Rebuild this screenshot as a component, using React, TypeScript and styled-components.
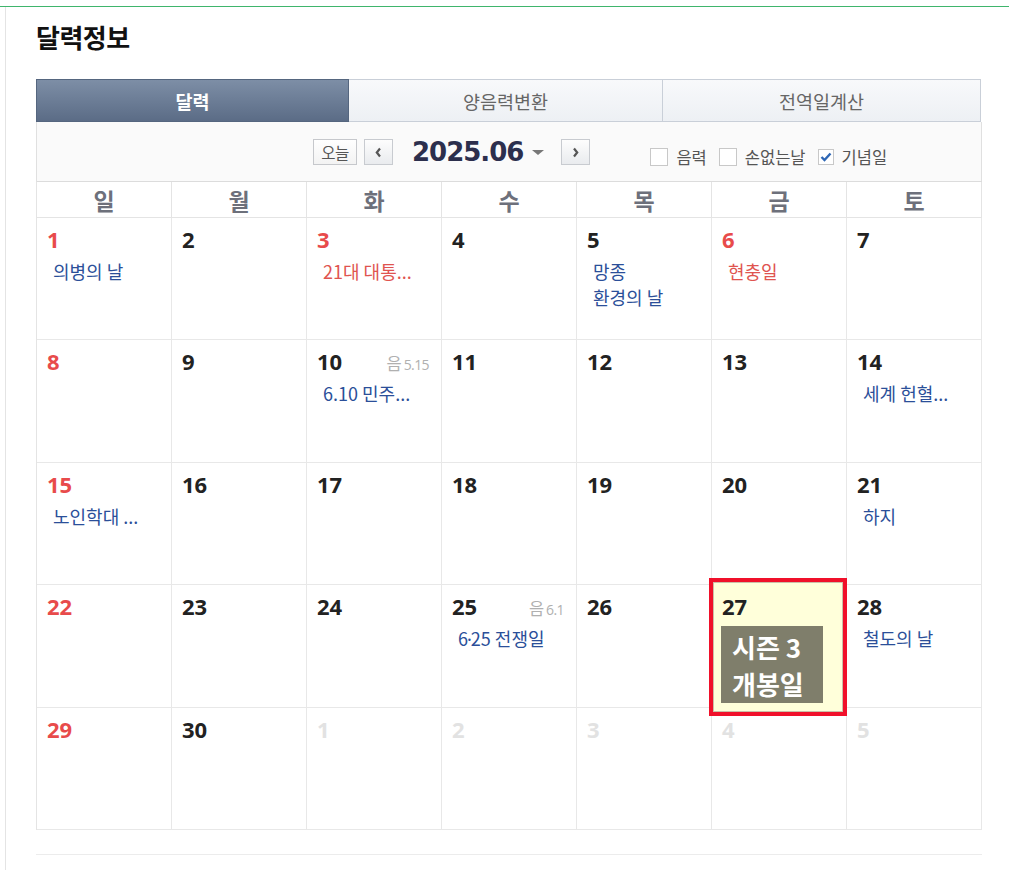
import React from "react";
import styled, { createGlobalStyle } from "styled-components";

const GlobalStyle = createGlobalStyle`
  html, body { margin: 0; padding: 0; background: #fff; }
  body { font-family: "Noto Sans CJK KR", "Noto Sans", sans-serif; }
  * { box-sizing: border-box; }
`;

const Page = styled.div`
  padding-top: 6px;
  width: 1009px;
  height: 870px;
  overflow: hidden;
`;

const TopRule = styled.div`
  height: 1px;
  background: #3fb56c;
`;

const Panel = styled.div`
  margin-left: 5px;
  border-left: 1px solid #e4e4e4;
  padding: 13px 0 20px 30px;
  width: 977px;
  min-height: 870px;
`;

const Title = styled.h2`
  margin: 0 0 26px;
  font-size: 26px;
  line-height: 33px;
  font-weight: 700;
  color: #111;
  letter-spacing: -0.5px;
`;

const Tabs = styled.div`
  display: grid;
  grid-template-columns: 313px 314px 318px;
  height: 43px;
`;

const Tab = styled.div<{ $active?: boolean }>`
  display: flex;
  align-items: center;
  justify-content: center;
  font-size: 18.5px;
  font-weight: ${(p) => (p.$active ? 700 : 400)};
  color: ${(p) => (p.$active ? "#fff" : "#666")};
  border: 1px solid ${(p) => (p.$active ? "#55667f" : "#c9cfd8")};
  border-left-width: ${(p) => (p.$active ? "1px" : "0")};
  background: ${(p) =>
    p.$active
      ? "linear-gradient(#7d8ea6, #5b6c86)"
      : "linear-gradient(#f8f9fb, #edf0f4)"};
`;

const ControlBar = styled.div`
  height: 59px;
  background: #fafafa;
  border-left: 1px solid #e0e0e0;
  border-right: 1px solid #e0e0e0;
  display: flex;
  align-items: flex-start;
  padding: 17px 0 0 276px;
`;

const TodayButton = styled.div`
  width: 44px;
  height: 26px;
  border: 1px solid #c6c8cc;
  background: linear-gradient(#ffffff, #f3f3f3);
  font-size: 15.5px;
  color: #555;
  display: flex;
  align-items: center;
  justify-content: center;
  letter-spacing: -0.5px;
`;

const NavButton = styled.div<{ $ml: number }>`
  width: 29px;
  height: 26px;
  margin-left: ${(p) => p.$ml}px;
  border: 1px solid #c8cbd0;
  background: linear-gradient(#fdfdfd, #e9ebee);
  display: flex;
  align-items: center;
  justify-content: center;
`;

const MonthLabel = styled.div`
  margin-left: 19px;
  font-family: "DejaVu Sans", sans-serif;
  font-weight: 700;
  font-size: 26px;
  letter-spacing: -1px;
  line-height: 26px;
  color: #2c2f4d;
`;

const Caret = styled.div`
  margin: 11px 0 0 9px;
  width: 0;
  height: 0;
  border-left: 6px solid transparent;
  border-right: 6px solid transparent;
  border-top: 5px solid #777;
`;

const Options = styled.div`
  margin-left: 60px;
  margin-top: 9px;
  display: flex;
  align-items: center;
`;

const Option = styled.label`
  display: flex;
  align-items: center;
  font-size: 16.5px;
  color: #555;
  margin-right: 12px;
  line-height: 18px;
`;

const Box = styled.span<{ $checked?: boolean }>`
  width: ${(p) => (p.$checked ? 16 : 18)}px;
  height: ${(p) => (p.$checked ? 16 : 18)}px;
  border: 1px solid #c8c8c8;
  background: #fff;
  margin-right: 8px;
  display: inline-flex;
  align-items: center;
  justify-content: center;
`;

const Grid = styled.div`
  display: grid;
  grid-template-columns: repeat(7, 135px);
  border-left: 1px solid #e4e4e4;
  border-top: 1px solid #dcdcdc;
  width: 946px;
`;

const HeadCell = styled.div`
  height: 36px;
  border-right: 1px solid #e4e4e4;
  border-bottom: 1px solid #e4e4e4;
  display: flex;
  align-items: center;
  justify-content: center;
  font-size: 23px;
  font-weight: 700;
  color: #6d707b;
`;

const Cell = styled.div<{ $highlight?: boolean }>`
  position: relative;
  z-index: ${(p) => (p.$highlight ? 2 : 1)};
  height: 122.4px;
  border-right: 1px solid #e8e8e8;
  border-bottom: 1px solid #e8e8e8;
  padding: 9px 12px 0 10px;
`;

const HighlightFrame = styled.div`
  position: absolute;
  left: -3px;
  right: -1px;
  top: -7px;
  bottom: -9px;
  border: 4px solid #f0102a;
  background: #ffffda;
  box-shadow: inset 0 0 0 1px #cbbfa8;
  z-index: -1;
`;

const DayLine = styled.div`
  display: flex;
  justify-content: space-between;
  align-items: baseline;
  height: 24px;
`;

const DayNum = styled.span<{ $tone: "red" | "dark" | "faded" }>`
  font-family: "Open Sans", sans-serif;
  font-weight: 700;
  font-size: 22px;
  line-height: 24px;
  color: ${(p) =>
    p.$tone === "red" ? "#e84b4b" : p.$tone === "faded" ? "#e2e2e2" : "#222"};
`;

const Lunar = styled.span`
  color: #b0b0b0;
  font-size: 16.5px;
  line-height: 24px;
  & small {
    font-family: "Open Sans", sans-serif;
    font-size: 14px;
    margin-left: 2px;
    letter-spacing: -0.6px;
  }
`;

const Events = styled.div`
  margin-top: 7px;
  padding-left: 6px;
`;

const EventText = styled.div<{ $red?: boolean }>`
  font-size: 18px;
  line-height: 26px;
  color: ${(p) => (p.$red ? "#e05450" : "#2b4f99")};
  white-space: nowrap;
`;

const Dot = styled.span`
  font-family: "Noto Sans", sans-serif;
  margin: 0 -1px;
`;

const Badge = styled.div`
  margin-top: 8px;
  margin-left: -1px;
  width: 102px;
  height: 77px;
  background: #7f7e6b;
  color: #fff;
  font-weight: 700;
  font-size: 26px;
  line-height: 37px;
  padding: 2px 0 0 11px;
  white-space: nowrap;
`;

const BottomRule = styled.div`
  margin-top: 24px;
  width: 946px;
  height: 1px;
  background: #ececec;
`;

type Day = {
  n: number;
  tone: "red" | "dark" | "faded";
  events?: { t: string; red?: boolean }[];
  lunar?: string;
  highlight?: boolean;
};

const d = (n: number, tone: Day["tone"] = "dark", extra: Partial<Day> = {}): Day => ({
  n,
  tone,
  ...extra,
});

const weeks: Day[][] = [
  [
    d(1, "red", { events: [{ t: "의병의 날" }] }),
    d(2),
    d(3, "red", { events: [{ t: "21대 대통...", red: true }] }),
    d(4),
    d(5, "dark", { events: [{ t: "망종" }, { t: "환경의 날" }] }),
    d(6, "red", { events: [{ t: "현충일", red: true }] }),
    d(7),
  ],
  [
    d(8, "red"),
    d(9),
    d(10, "dark", { lunar: "5.15", events: [{ t: "6.10 민주..." }] }),
    d(11),
    d(12),
    d(13),
    d(14, "dark", { events: [{ t: "세계 헌혈..." }] }),
  ],
  [
    d(15, "red", { events: [{ t: "노인학대 ..." }] }),
    d(16),
    d(17),
    d(18),
    d(19),
    d(20),
    d(21, "dark", { events: [{ t: "하지" }] }),
  ],
  [
    d(22, "red"),
    d(23),
    d(24),
    d(25, "dark", { lunar: "6.1", events: [{ t: "6·25 전쟁일" }] }),
    d(26),
    d(27, "dark", { highlight: true }),
    d(28, "dark", { events: [{ t: "철도의 날" }] }),
  ],
  [d(29, "red"), d(30), d(1, "faded"), d(2, "faded"), d(3, "faded"), d(4, "faded"), d(5, "faded")],
];

const weekdays = ["일", "월", "화", "수", "목", "금", "토"];

const Chevron = ({ dir }: { dir: "left" | "right" }) => (
  <svg width="9" height="11" viewBox="0 0 9 11">
    <path
      d={dir === "left" ? "M6 1.5 L2.8 5.5 L6 9.5" : "M3 1.5 L6.2 5.5 L3 9.5"}
      fill="none"
      stroke="#555"
      strokeWidth="2.2"
    />
  </svg>
);

const Check = () => (
  <svg width="12" height="10" viewBox="0 0 12 10">
    <path d="M1.5 5 L4.5 8 L10.5 1.5" fill="none" stroke="#2f67b5" strokeWidth="2.4" />
  </svg>
);

const renderEvent = (t: string) => {
  const parts = t.split("·");
  if (parts.length === 1) return t;
  return (
    <>
      {parts[0]}
      <Dot>·</Dot>
      {parts[1]}
    </>
  );
};

export default function App() {
  return (
    <Page>
      <GlobalStyle />
      <TopRule />
      <Panel>
        <Title>달력정보</Title>
        <Tabs>
          <Tab $active>달력</Tab>
          <Tab>양음력변환</Tab>
          <Tab>전역일계산</Tab>
        </Tabs>
        <ControlBar>
          <TodayButton>오늘</TodayButton>
          <NavButton $ml={7}>
            <Chevron dir="left" />
          </NavButton>
          <MonthLabel>2025.06</MonthLabel>
          <Caret />
          <NavButton $ml={17}>
            <Chevron dir="right" />
          </NavButton>
          <Options>
            <Option>
              <Box />
              음력
            </Option>
            <Option>
              <Box />
              손없는날
            </Option>
            <Option>
              <Box $checked>
                <Check />
              </Box>
              기념일
            </Option>
          </Options>
        </ControlBar>
        <Grid>
          {weekdays.map((w) => (
            <HeadCell key={w}>{w}</HeadCell>
          ))}
          {weeks.flat().map((day, i) => (
            <Cell key={i} $highlight={day.highlight}>
              {day.highlight && <HighlightFrame />}
              <DayLine>
                <DayNum $tone={day.tone}>{day.n}</DayNum>
                {day.lunar && (
                  <Lunar>
                    음<small>{day.lunar}</small>
                  </Lunar>
                )}
              </DayLine>
              {day.events && (
                <Events>
                  {day.events.map((e) => (
                    <EventText key={e.t} $red={e.red}>
                      {renderEvent(e.t)}
                    </EventText>
                  ))}
                </Events>
              )}
              {day.highlight && (
                <Badge>
                  시즌 3
                  <br />
                  개봉일
                </Badge>
              )}
            </Cell>
          ))}
        </Grid>
        <BottomRule />
      </Panel>
    </Page>
  );
}
